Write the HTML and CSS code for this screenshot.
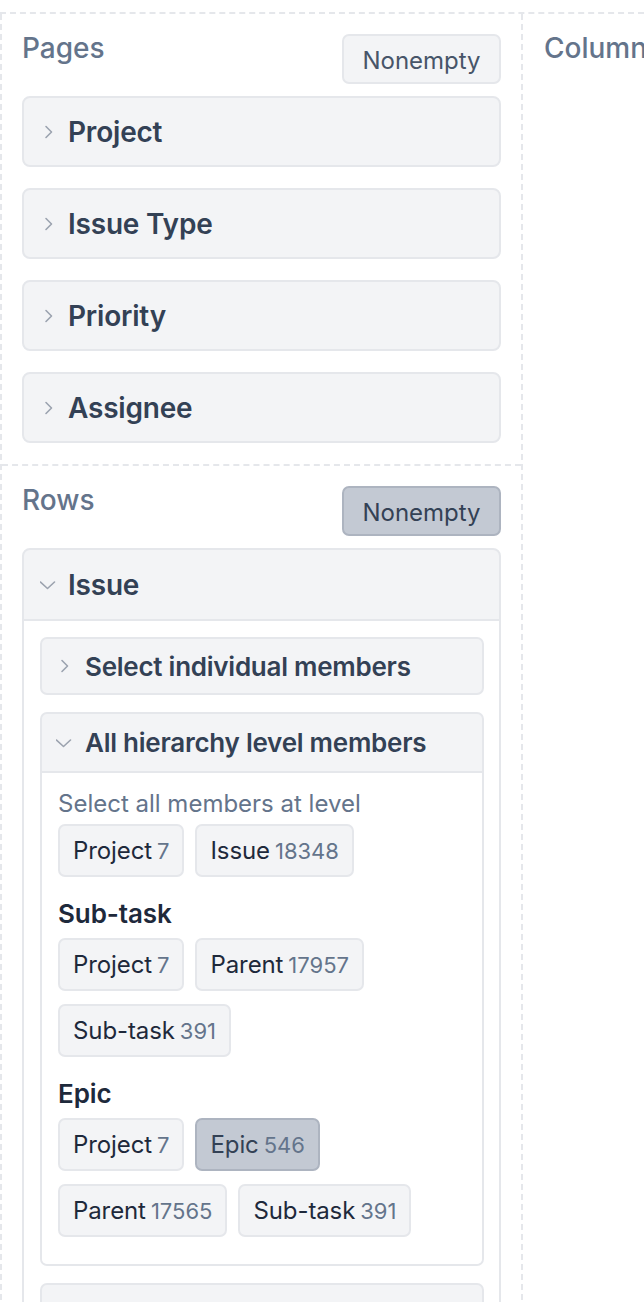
FILE: index.html
```html
<!DOCTYPE html>
<html lang="en">
<head>
<meta charset="utf-8">
<title>Pivot layout</title>
<link rel="stylesheet" href="styles.css">
</head>
<body>
<div class="layout">
  <div class="left">
    <section class="section pages">
      <div class="section-head">
        <h2 class="section-title">Pages</h2>
        <button class="toggle">Nonempty</button>
      </div>
      <div class="stack">
        <div class="card">
          <div class="card-head">
            <svg class="chev" viewBox="0 0 16 16"><path d="M6 2.5l5.5 5.5-5.5 5.5"/></svg>
            <span class="card-title">Project</span>
          </div>
        </div>
        <div class="card">
          <div class="card-head">
            <svg class="chev" viewBox="0 0 16 16"><path d="M6 2.5l5.5 5.5-5.5 5.5"/></svg>
            <span class="card-title">Issue Type</span>
          </div>
        </div>
        <div class="card">
          <div class="card-head">
            <svg class="chev" viewBox="0 0 16 16"><path d="M6 2.5l5.5 5.5-5.5 5.5"/></svg>
            <span class="card-title">Priority</span>
          </div>
        </div>
        <div class="card">
          <div class="card-head">
            <svg class="chev" viewBox="0 0 16 16"><path d="M6 2.5l5.5 5.5-5.5 5.5"/></svg>
            <span class="card-title">Assignee</span>
          </div>
        </div>
      </div>
    </section>
    <section class="section rows">
      <div class="section-head">
        <h2 class="section-title">Rows</h2>
        <button class="toggle active">Nonempty</button>
      </div>
      <div class="stack">
        <div class="card open">
          <div class="card-head">
            <svg class="chev down" viewBox="0 0 16 16"><path d="M0.5 5l7 6.5 7-6.5"/></svg>
            <span class="card-title">Issue</span>
          </div>
          <div class="card-body">
            <div class="sub">
              <div class="sub-head">
                <svg class="chev" viewBox="0 0 16 16"><path d="M6 2.5l5.5 5.5-5.5 5.5"/></svg>
                <span class="sub-title">Select individual members</span>
              </div>
            </div>
            <div class="sub open">
              <div class="sub-head">
                <svg class="chev down" viewBox="0 0 16 16"><path d="M0.5 5l7 6.5 7-6.5"/></svg>
                <span class="sub-title">All hierarchy level members</span>
              </div>
              <div class="sub-body">
                <p class="hint">Select all members at level</p>
                <div class="chips">
                  <span class="chip">Project<span class="count">7</span></span>
                  <span class="chip">Issue<span class="count">18348</span></span>
                </div>
                <h3 class="group">Sub-task</h3>
                <div class="chips">
                  <span class="chip">Project<span class="count">7</span></span>
                  <span class="chip">Parent<span class="count">17957</span></span>
                  <span class="chip">Sub-task<span class="count">391</span></span>
                </div>
                <h3 class="group">Epic</h3>
                <div class="chips">
                  <span class="chip">Project<span class="count">7</span></span>
                  <span class="chip selected">Epic<span class="count">546</span></span>
                  <span class="chip">Parent<span class="count">17565</span></span>
                  <span class="chip">Sub-task<span class="count">391</span></span>
                </div>
              </div>
            </div>
            <div class="sub">
              <div class="sub-head">
                <svg class="chev" viewBox="0 0 16 16"><path d="M6 2.5l5.5 5.5-5.5 5.5"/></svg>
              </div>
            </div>
          </div>
        </div>
      </div>
    </section>
  </div>
  <div class="right">
    <h2 class="section-title">Columns</h2>
  </div>
</div>
</body>
</html>
```
FILE: styles.css
```css
* { box-sizing: border-box; }
html, body { margin: 0; padding: 0; background: #fff; overflow: hidden; }
body {
  font-family: "Inter", "Liberation Sans", sans-serif;
  color: #334155;
  width: 644px;
  height: 1302px;
}
.layout {
  margin-top: 12px;
  border-top: 2px dashed #e5e7eb;
  display: grid;
  grid-template-columns: 523px 1fr;
  min-height: 1290px;
}
.left {
  border-left: 2px dashed #e5e7eb;
  border-right: 2px dashed #e5e7eb;
}
.section { padding: 20px 20px 21px 20px; }
.pages { border-bottom: 2px dashed #e5e7eb; }
.section-head {
  display: flex;
  justify-content: space-between;
  align-items: flex-start;
  margin-bottom: 12px;
}
.section-title {
  margin: -3px 0 0 0;
  font-size: 28px;
  line-height: 34px;
  font-weight: 500;
  color: #64748b;
  white-space: nowrap;
}
.toggle {
  font-family: inherit;
  font-size: 24px;
  line-height: 26px;
  height: 50px;
  padding: 3px 20px 0 20px;
  border: 2px solid #e5e7eb;
  border-radius: 7px;
  background: #f3f4f6;
  color: #475569;
  width: 159px;
  display: flex;
  align-items: center;
  justify-content: center;
}
.toggle.active {
  background: #c3c9d3;
  border-color: #adb4c0;
  color: #334155;
}
.stack { display: flex; flex-direction: column; gap: 21px; }
.card {
  border: 2px solid #e5e7eb;
  border-radius: 8px;
  background: #f3f4f6;
  overflow: hidden;
}
.card-head {
  height: 67px;
  display: flex;
  align-items: center;
  padding: 0 16px;
  gap: 12px;
}
.card.open .card-head { border-bottom: 2px solid #e5e7eb; height: 71px; }
.chev {
  width: 16px;
  height: 16px;
  flex: none;
  fill: none;
  stroke: #9ca3af;
  stroke-width: 1.6;
  stroke-linecap: round;
  stroke-linejoin: round;
}
.card-title {
  font-size: 28px;
  font-weight: 600;
  letter-spacing: -0.2px;
  color: #334155;
}
.card-body {
  background: #fff;
  padding: 16px 15px 16px 16px;
  display: flex;
  flex-direction: column;
  gap: 17px;
}
.sub {
  border: 2px solid #e5e7eb;
  border-radius: 7px;
  background: #f3f4f6;
  overflow: hidden;
}
.sub-head {
  height: 54px;
  display: flex;
  align-items: center;
  padding: 0 14px;
  gap: 13px;
}
.sub.open .sub-head { border-bottom: 2px solid #e5e7eb; height: 59px; }
.sub-title {
  font-size: 26px;
  font-weight: 600;
  letter-spacing: -0.25px;
  color: #334155;
  white-space: nowrap;
}
.sub-body {
  background: #fff;
  padding: 16px 16px 27px 16px;
}
.hint {
  margin: 0 0 6px 0;
  font-size: 24px;
  line-height: 29px;
  color: #64748b;
}
.chips {
  display: flex;
  flex-wrap: wrap;
  gap: 13px 11px;
}
.chip {
  display: inline-flex;
  align-items: baseline;
  height: 53px;
  border: 2px solid #e5e7eb;
  border-radius: 7px;
  background: #f3f4f6;
  padding: 10px 13px 10px 13px;
  font-size: 24px;
  line-height: 29px;
  letter-spacing: -0.1px;
  color: #1e293b;
}
.chip.selected {
  background: #c3c9d3;
  border-color: #adb4c0;
  color: #334155;
}
.count {
  margin-left: 5px;
  font-size: 22px;
  line-height: 29px;
  letter-spacing: 0;
  color: #64748b;
}
.group {
  margin: 22px 0 10px 0;
  font-size: 26px;
  line-height: 29px;
  font-weight: 600;
  letter-spacing: -0.1px;
  color: #1e293b;
}
.right {
  padding: 20px 0 0 21px;
  overflow: hidden;
}
```
